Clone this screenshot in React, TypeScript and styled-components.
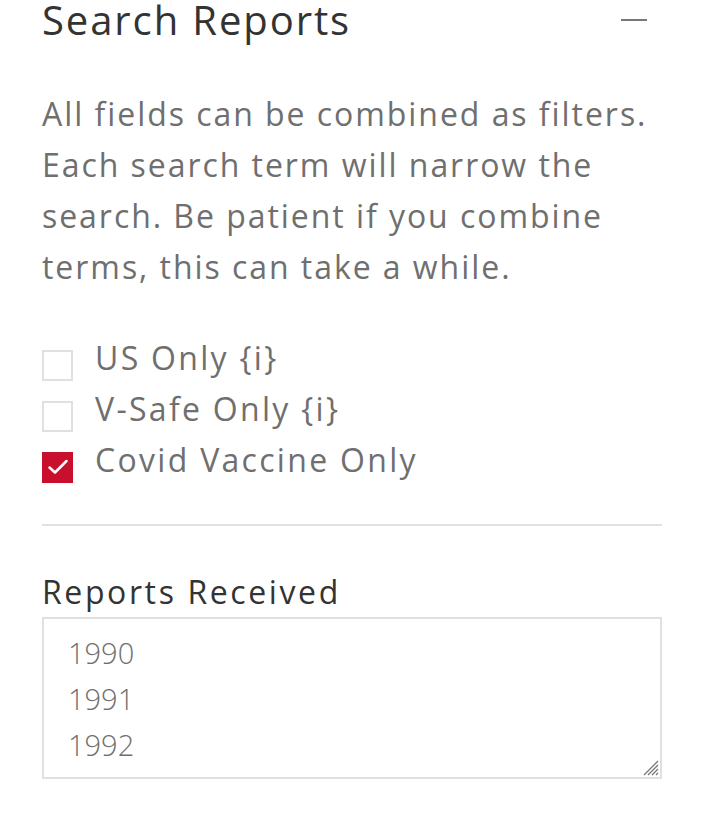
import React, { useState } from "react";
import styled, { createGlobalStyle } from "styled-components";

const GlobalStyle = createGlobalStyle`
  html, body {
    margin: 0;
    padding: 0;
    background: #fff;
  }
  body {
    font-family: "Open Sans", "Liberation Sans", sans-serif;
    -webkit-font-smoothing: antialiased;
  }
`;

interface Filter {
  id: string;
  label: string;
  checked: boolean;
}

const years = ["1990", "1991", "1992", "1993", "1994"];

const App: React.FC = () => {
  const [filters, setFilters] = useState<Filter[]>([
    { id: "us", label: "US Only {i}", checked: false },
    { id: "vsafe", label: "V-Safe Only {i}", checked: false },
    { id: "covid", label: "Covid Vaccine Only", checked: true },
  ]);

  const toggle = (id: string) => {
    setFilters(filters.map((f) => (f.id === id ? { ...f, checked: !f.checked } : f)));
  };

  return (
    <>
      <GlobalStyle />
      <Panel>
        <Header>
          <Title>Search Reports</Title>
          <Collapse aria-label="collapse" />
        </Header>
        <Intro>
          All fields can be combined as filters. Each search term will narrow the search. Be
          patient if you combine terms, this can take a while.
        </Intro>
        <Checks>
          {filters.map((f) => (
            <CheckRow key={f.id} onClick={() => toggle(f.id)}>
              <Box $checked={f.checked}>
                {f.checked && (
                  <svg width="22" height="18" viewBox="0 0 22 18">
                    <path
                      d="M2.5 9.5 L8 14.5 L19.5 3"
                      fill="none"
                      stroke="#fff"
                      strokeWidth="2.5"
                      strokeLinecap="round"
                      strokeLinejoin="round"
                    />
                  </svg>
                )}
              </Box>
              <CheckLabel>{f.label}</CheckLabel>
            </CheckRow>
          ))}
        </Checks>
        <Divider />
        <FieldLabel>Reports Received</FieldLabel>
        <ListBox>
          {years.map((y) => (
            <Option key={y}>{y}</Option>
          ))}
          <Grip width="20" height="20" viewBox="0 0 20 20">
            <path d="M19 5 L5 19 M19 9 L9 19 M19 13 L13 19 M19 17 L17 19" stroke="#777" strokeWidth="1.3" />
          </Grip>
        </ListBox>
      </Panel>
    </>
  );
};

const Panel = styled.div`
  width: 620px;
  padding: 0 56px 40px 42px;
`;

const Header = styled.div`
  display: flex;
  justify-content: space-between;
  align-items: center;
  margin-top: -4px;
`;

const Title = styled.h2`
  margin: 0;
  font-size: 40px;
  font-weight: 400;
  line-height: 48px;
  color: #333;
  letter-spacing: 1.9px;
`;

const Collapse = styled.span`
  display: block;
  width: 26px;
  height: 2px;
  background: #777;
  margin: 0 15px 0 0;
`;

const Intro = styled.p`
  margin: 44px 0 0;
  font-size: 32px;
  line-height: 51px;
  color: #6f6f6f;
  letter-spacing: 1.95px;
`;

const Checks = styled.div`
  margin-top: 40px;
  display: flex;
  flex-direction: column;
`;

const CheckRow = styled.label`
  display: flex;
  align-items: center;
  height: 51px;
  cursor: pointer;
`;

const Box = styled.span<{ $checked: boolean }>`
  box-sizing: border-box;
  width: 31px;
  height: 31px;
  margin-top: 15px;
  margin-right: 22px;
  display: flex;
  align-items: center;
  justify-content: center;
  border: ${(p) => (p.$checked ? "none" : "2px solid #e0e0e0")};
  background: ${(p) => (p.$checked ? "#c8102e" : "#fff")};
`;

const CheckLabel = styled.span`
  font-size: 32px;
  color: #6f6f6f;
  letter-spacing: 2.3px;
`;

const Divider = styled.hr`
  border: none;
  height: 2px;
  background: #e2e2e2;
  margin: 39px 0 0;
`;

const FieldLabel = styled.div`
  margin-top: 46px;
  font-size: 32px;
  line-height: 40px;
  color: #333;
  letter-spacing: 2.6px;
`;

const ListBox = styled.div`
  position: relative;
  box-sizing: border-box;
  height: 162px;
  margin-top: 5px;
  border: 2px solid #e0e0e0;
  padding: 11px 24px;
  overflow: hidden;
`;

const Option = styled.div`
  font-size: 29px;
  line-height: 46px;
  color: #6f6f6f;
  font-weight: 300;
`;

const Grip = styled.svg`
  position: absolute;
  right: 1px;
  bottom: 1px;
`;

export default App;
